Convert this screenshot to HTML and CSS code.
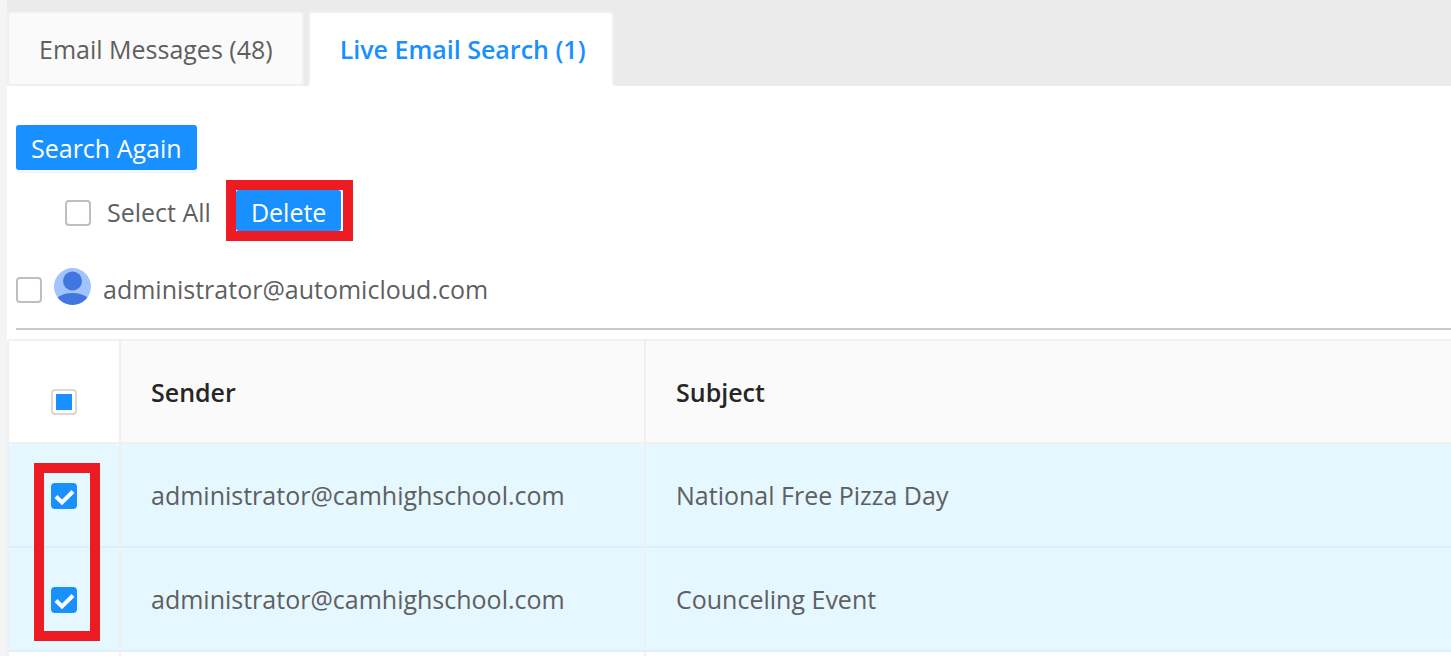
FILE: index.html
```html
<!DOCTYPE html>
<html lang="en">
<head>
<meta charset="utf-8">
<title>Live Email Search</title>
<link rel="stylesheet" href="styles.css">
</head>
<body>
<main class="page">
  <nav class="tabs">
    <button class="tab" type="button">Email Messages (48)</button>
    <button class="tab tab-active" type="button">Live Email Search (1)</button>
  </nav>
  <section class="toolbar">
    <button class="btn" type="button">Search Again</button>
    <div class="actions">
      <label class="choice"><input class="check" type="checkbox"><span>Select All</span></label>
      <div class="marked"><button class="btn btn-small" type="button">Delete</button></div>
    </div>
    <div class="account">
      <input class="check" type="checkbox" id="account">
      <svg class="avatar" viewBox="0 0 37 37" aria-hidden="true">
        <defs><clipPath id="disc"><circle cx="18.5" cy="18.5" r="18.5"/></clipPath></defs>
        <g clip-path="url(#disc)">
          <rect width="37" height="37" fill="#a1c4ff"/>
          <circle cx="18.5" cy="13" r="9.5" fill="#4175df"/>
          <ellipse cx="18.5" cy="35" rx="18" ry="10" fill="#4175df"/>
        </g>
      </svg>
      <label for="account">administrator@automicloud.com</label>
    </div>
  </section>
  <table class="mail">
    <colgroup><col class="col-check"><col class="col-sender"><col></colgroup>
    <thead>
      <tr>
        <th class="pick pick-all"><input class="check check-some" type="checkbox" aria-label="Select all messages"></th>
        <th>Sender</th>
        <th>Subject</th>
      </tr>
    </thead>
    <tbody>
      <tr class="selected">
        <td class="pick"><input class="check" type="checkbox" checked aria-label="Select National Free Pizza Day"><span class="pick-frame"></span></td>
        <td>administrator@camhighschool.com</td>
        <td>National Free Pizza Day</td>
      </tr>
      <tr class="selected">
        <td class="pick"><input class="check" type="checkbox" checked aria-label="Select Counceling Event"></td>
        <td>administrator@camhighschool.com</td>
        <td>Counceling Event</td>
      </tr>
      <tr class="next"><td></td><td></td><td></td></tr>
    </tbody>
  </table>
</main>
</body>
</html>
```
FILE: styles.css
```css
* { box-sizing: border-box; }

body {
  margin: 0;
  padding-left: 7px;
  background: #f3f4f6;
  color: #5f5f5f;
  font: 25px/36px "Open Sans", "Noto Sans", sans-serif;
}

button { font: inherit; cursor: pointer; }

.page { min-height: 100vh; background: #fff; }

.tabs {
  display: flex;
  gap: 4px;
  padding-top: 11px;
  background: #ebebeb;
}

.tab {
  height: 75px;
  padding: 0 29px 0 30px;
  border: 2px solid #f0f0f0;
  border-radius: 4px 4px 0 0;
  background: #fafafa;
  color: #5f5f5f;
  white-space: nowrap;
}

.tab-active {
  padding-right: 26px;
  border-bottom-color: #fff;
  background: #fff;
  color: #1890ff;
  font-weight: 600;
}

.toolbar { padding: 39px 0 0 9px; }

.btn {
  display: block;
  height: 45px;
  padding: 0 15px;
  border: 0;
  border-radius: 3px;
  background: #1890ff;
  box-shadow: 0 3px 0 #f5f5f5;
  color: #fff;
}

.actions {
  display: flex;
  align-items: center;
  gap: 15px;
  height: 61px;
  margin-top: 10px;
  padding-left: 49px;
}

.choice { display: flex; align-items: center; gap: 16px; padding-top: 4px; }
.choice span { padding-bottom: 2px; }

.marked { padding: 10px 12px 10px 10px; position: relative; }

.marked::after {
  content: "";
  position: absolute;
  inset: 0;
  border: 10px solid #ed1c24;
  pointer-events: none;
}

.btn-small { height: 41px; box-shadow: none; padding: 2px 15px 0; }

.account {
  display: flex;
  align-items: center;
  gap: 12px;
  height: 89px;
  padding-top: 10px;
  border-bottom: 2px solid #cbcbcb;
}

.account label { padding-bottom: 2px; }

.avatar { width: 37px; height: 37px; margin-bottom: 6px; }

.check {
  appearance: none;
  flex: none;
  display: block;
  width: 26px;
  height: 26px;
  margin: 0;
  border: 2px solid #bfbfbf;
  border-radius: 4px;
  background: #fff center / 22px 22px no-repeat;
}

.check:checked {
  border-color: #1890ff;
  background-color: #1890ff;
  background-image: url("data:image/svg+xml,%3Csvg xmlns='http://www.w3.org/2000/svg' viewBox='0 0 22 22'%3E%3Cpath d='M3 11.5l6 6L20 6.5' fill='none' stroke='white' stroke-width='4'/%3E%3C/svg%3E");
}

.check-some {
  border-color: #d9d9d9;
  background-image: linear-gradient(#1890ff, #1890ff);
  background-size: 16px 16px;
}

.mail {
  width: 100%;
  margin-top: 9px;
  table-layout: fixed;
  border-collapse: separate;
  border-spacing: 0;
  border-top: 2px solid #f0f0f0;
  border-left: 2px solid #f0f0f0;
  border-radius: 4px 0 0;
}

.col-check { width: 112px; }
.col-sender { width: 525px; }

.mail th,
.mail td {
  height: 104px;
  padding: 0 30px;
  border-right: 2px solid #f0f0f0;
  border-bottom: 2px solid #f0f0f0;
  text-align: left;
  white-space: nowrap;
}

.mail th {
  height: 103px;
  padding-top: 1px;
  background: #fafafa;
  color: #262626;
  font-weight: 600;
}

.mail th:last-child, .mail td:last-child { border-right: 0; }

.mail .pick { position: relative; padding: 2px 42px 0; }
.mail .pick-all { padding-top: 21px; background: #fff; }

.mail .selected td { background: #e5f7ff; border-bottom-color: #deeff8; }

.mail .next td { height: 4px; padding: 0; border-bottom: 0; }

.pick-frame {
  position: absolute;
  z-index: 1;
  top: 19px;
  left: 25px;
  width: 66px;
  height: 178px;
  border: 10px solid #ed1c24;
  pointer-events: none;
}
```
